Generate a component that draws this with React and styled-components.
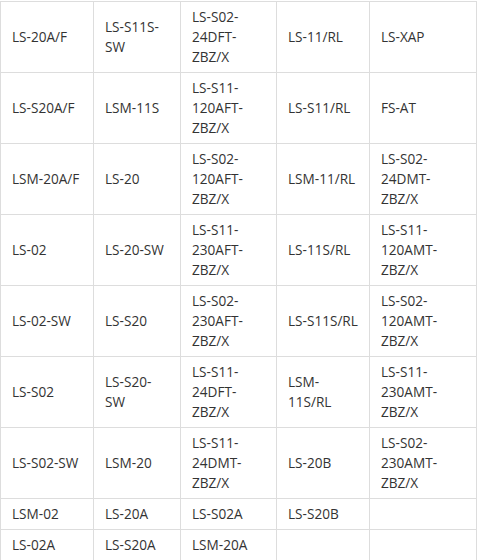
import React from "react";
import styled, { createGlobalStyle } from "styled-components";

const rows = [
  ["LS-20A/F", "LS-S11S-SW", "LS-S02-24DFT-ZBZ/X", "LS-11/RL", "LS-XAP"],
  ["LS-S20A/F", "LSM-11S", "LS-S11-120AFT-ZBZ/X", "LS-S11/RL", "FS-AT"],
  ["LSM-20A/F", "LS-20", "LS-S02-120AFT-ZBZ/X", "LSM-11/RL", "LS-S02-24DMT-ZBZ/X"],
  ["LS-02", "LS-20-SW", "LS-S11-230AFT-ZBZ/X", "LS-11S/RL", "LS-S11-120AMT-ZBZ/X"],
  ["LS-02-SW", "LS-S20", "LS-S02-230AFT-ZBZ/X", "LS-S11S/RL", "LS-S02-120AMT-ZBZ/X"],
  ["LS-S02", "LS-S20-SW", "LS-S11-24DFT-ZBZ/X", "LSM-11S/RL", "LS-S11-230AMT-ZBZ/X"],
  ["LS-S02-SW", "LSM-20", "LS-S11-24DMT-ZBZ/X", "LS-20B", "LS-S02-230AMT-ZBZ/X"],
  ["LSM-02", "LS-20A", "LS-S02A", "LS-S20B", ""],
  ["LS-02A", "LS-S20A", "LSM-20A", "", ""],
];

const widths = [93, 87, 96, 93, 107];

const GlobalStyle = createGlobalStyle`
  body {
    margin: 0;
    background: #fff;
    font-family: "Open Sans", "Liberation Sans", sans-serif;
  }
`;

const Wrapper = styled.div`
  padding-top: 1px;
`;

const Table = styled.table`
  width: 476px;
  table-layout: fixed;
  border-collapse: collapse;
  font-size: 13.6px;
  line-height: 20px;
  color: #333;
`;

const Cell = styled.td`
  border: 1px solid #ddd;
  padding: 5px 11px;
  vertical-align: middle;
  text-align: left;
`;

export default function App() {
  return (
    <Wrapper>
      <GlobalStyle />
      <Table>
        <colgroup>
          {widths.map((w, i) => (
            <col key={i} style={{ width: w }} />
          ))}
        </colgroup>
        <tbody>
          {rows.map((row, r) => (
            <tr key={r}>
              {row.map((text, c) => (
                <Cell key={c}>{text}</Cell>
              ))}
            </tr>
          ))}
        </tbody>
      </Table>
    </Wrapper>
  );
}
